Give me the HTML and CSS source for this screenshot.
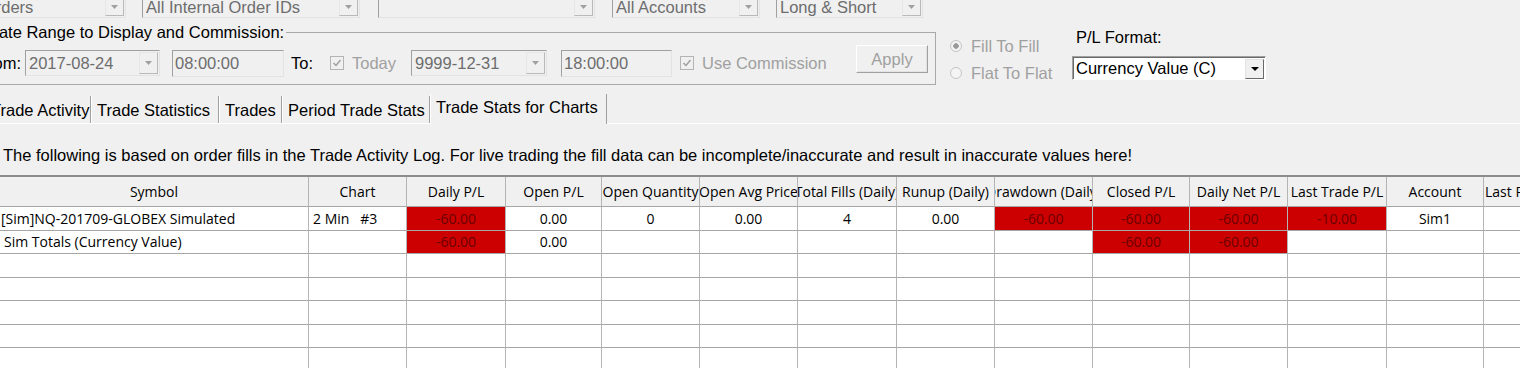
FILE: index.html
```html
<!DOCTYPE html>
<html lang="en">
<head>
    <meta charset="UTF-8">
    <title>Trade Activity and Statistics</title>
    <link rel="stylesheet" href="styles.css">
</head>
<body>
<div class="filters">
    <div class="combo combo-orders"><span class="combo-text">All Orders</span><span class="drop"><svg width="7" height="4" viewBox="0 0 7 4"><path d="M0 0h7L3.5 4z" fill="#a0a0a0"/></svg></span></div>
    <div class="combo combo-ids"><span class="combo-text">All Internal Order IDs</span><span class="drop"><svg width="7" height="4" viewBox="0 0 7 4"><path d="M0 0h7L3.5 4z" fill="#a0a0a0"/></svg></span></div>
    <div class="combo combo-blank"><span class="combo-text"></span><span class="drop"><svg width="7" height="4" viewBox="0 0 7 4"><path d="M0 0h7L3.5 4z" fill="#a0a0a0"/></svg></span></div>
    <div class="combo combo-accounts"><span class="combo-text">All Accounts</span><span class="drop"><svg width="7" height="4" viewBox="0 0 7 4"><path d="M0 0h7L3.5 4z" fill="#a0a0a0"/></svg></span></div>
    <div class="combo combo-side"><span class="combo-text">Long &amp; Short</span><span class="drop"><svg width="7" height="4" viewBox="0 0 7 4"><path d="M0 0h7L3.5 4z" fill="#a0a0a0"/></svg></span></div>
</div>

<div class="options">
    <fieldset class="range">
        <legend>Date Range to Display and Commission:</legend>
        <div class="range-row">
            <span class="lbl lbl-from">From:</span>
            <div class="combo date-from"><span class="combo-text">2017-08-24</span><span class="drop"><svg width="7" height="4" viewBox="0 0 7 4"><path d="M0 0h7L3.5 4z" fill="#a0a0a0"/></svg></span></div>
            <div class="field time-from">08:00:00</div>
            <span class="lbl lbl-to">To:</span>
            <span class="check"><svg width="12" height="12" viewBox="0 0 12 12"><path d="M2.5 6l2.5 2.5L9.5 3" stroke="#a0a0a0" stroke-width="1.5" fill="none"/></svg></span>
            <span class="lbl dim lbl-today">Today</span>
            <div class="combo date-to"><span class="combo-text">9999-12-31</span><span class="drop"><svg width="7" height="4" viewBox="0 0 7 4"><path d="M0 0h7L3.5 4z" fill="#a0a0a0"/></svg></span></div>
            <div class="field time-to">18:00:00</div>
            <span class="check check-comm"><svg width="12" height="12" viewBox="0 0 12 12"><path d="M2.5 6l2.5 2.5L9.5 3" stroke="#a0a0a0" stroke-width="1.5" fill="none"/></svg></span>
            <span class="lbl dim lbl-comm">Use Commission</span>
            <button class="apply" disabled>Apply</button>
        </div>
    </fieldset>

    <div class="radios">
        <div class="radio-row"><span class="radio on"></span>Fill To Fill</div>
        <div class="radio-row second"><span class="radio"></span>Flat To Flat</div>
    </div>

    <div class="plformat">
        <div class="pl-label">P/L Format:</div>
        <div class="select"><span class="select-text">Currency Value (C)</span><span class="select-btn"><svg width="8" height="4" viewBox="0 0 8 4"><path d="M0 0h8L4 4z" fill="#000"/></svg></span></div>
    </div>
</div>

<div class="tabs">
    <div class="tab tab-activity">Trade Activity</div>
    <div class="tab tab-stats">Trade Statistics</div>
    <div class="tab tab-trades">Trades</div>
    <div class="tab tab-period">Period Trade Stats</div>
    <div class="tab tab-charts active">Trade Stats for Charts</div>
</div>

<p class="notice">The following is based on order fills in the Trade Activity Log. For live trading the fill data can be incomplete/inaccurate and result in inaccurate values here!</p>

<div class="grid">
    <div class="h"><span>Symbol</span></div><div class="h"><span>Chart</span></div><div class="h"><span>Daily P/L</span></div><div class="h"><span>Open P/L</span></div><div class="h"><span>Open Quantity</span></div><div class="h"><span>Open Avg Price</span></div><div class="h"><span>Total Fills (Daily)</span></div><div class="h"><span>Runup (Daily)</span></div><div class="h"><span>Drawdown (Daily)</span></div><div class="h"><span>Closed P/L</span></div><div class="h"><span>Daily Net P/L</span></div><div class="h"><span>Last Trade P/L</span></div><div class="h"><span>Account</span></div><div class="h h-last"><span>Last Position P/L</span></div>

    <div class="c sym">[Sim]NQ-201709-GLOBEX Simulated</div><div class="c chart">2 Min   #3</div><div class="c neg">-60.00</div><div class="c">0.00</div><div class="c">0</div><div class="c">0.00</div><div class="c">4</div><div class="c">0.00</div><div class="c neg">-60.00</div><div class="c neg">-60.00</div><div class="c neg">-60.00</div><div class="c neg">-10.00</div><div class="c">Sim1</div><div class="c"></div>

    <div class="c sym total">Sim Totals (Currency Value)</div><div class="c"></div><div class="c neg">-60.00</div><div class="c">0.00</div><div class="c"></div><div class="c"></div><div class="c"></div><div class="c"></div><div class="c"></div><div class="c neg">-60.00</div><div class="c neg">-60.00</div><div class="c"></div><div class="c"></div><div class="c"></div>

    <div class="c"></div><div class="c"></div><div class="c"></div><div class="c"></div><div class="c"></div><div class="c"></div><div class="c"></div><div class="c"></div><div class="c"></div><div class="c"></div><div class="c"></div><div class="c"></div><div class="c"></div><div class="c"></div>
    <div class="c"></div><div class="c"></div><div class="c"></div><div class="c"></div><div class="c"></div><div class="c"></div><div class="c"></div><div class="c"></div><div class="c"></div><div class="c"></div><div class="c"></div><div class="c"></div><div class="c"></div><div class="c"></div>
    <div class="c"></div><div class="c"></div><div class="c"></div><div class="c"></div><div class="c"></div><div class="c"></div><div class="c"></div><div class="c"></div><div class="c"></div><div class="c"></div><div class="c"></div><div class="c"></div><div class="c"></div><div class="c"></div>
    <div class="c"></div><div class="c"></div><div class="c"></div><div class="c"></div><div class="c"></div><div class="c"></div><div class="c"></div><div class="c"></div><div class="c"></div><div class="c"></div><div class="c"></div><div class="c"></div><div class="c"></div><div class="c"></div>
    <div class="c"></div><div class="c"></div><div class="c"></div><div class="c"></div><div class="c"></div><div class="c"></div><div class="c"></div><div class="c"></div><div class="c"></div><div class="c"></div><div class="c"></div><div class="c"></div><div class="c"></div><div class="c"></div>
</div>
</body>
</html>
```

FILE: styles.css
```css
body {
    margin: 0;
    width: 1520px;
    height: 368px;
    overflow: hidden;
    background-color: #f0f0f0;
    font-family: "Liberation Sans", Arial, sans-serif;
    font-size: 16.5px;
    color: #000;
}

/* top filter combos, cut off by the window top */
.filters {
    display: flex;
    height: 18px;
}

.combo {
    display: flex;
    align-items: center;
    box-sizing: border-box;
    height: 24px;
    border: 1px solid #e3e3e3;
    border-top-color: #a0a0a0;
    border-left-color: #a0a0a0;
    background-color: #f0f0f0;
    color: #6d6d6d;
}

.filters .combo {
    height: 23px;
    margin-top: -5px;
}

.combo-text {
    flex: 1;
    padding-left: 3px;
    line-height: 18px;
    white-space: nowrap;
    overflow: hidden;
}

.drop {
    display: flex;
    align-items: center;
    justify-content: center;
    box-sizing: border-box;
    width: 19px;
    height: calc(100% - 2px);
    margin-right: 1px;
    border: 1px solid #b9b9b9;
    border-top-color: #e6e6e6;
    border-left-color: #e6e6e6;
}

.combo-orders { margin-left: -44px; width: 170px; }
.combo-ids { margin-left: 16px; width: 218px; }
.combo-blank { margin-left: 18px; width: 217px; }
.combo-accounts { margin-left: 17px; width: 148px; }
.combo-side { margin-left: 16px; width: 147px; }

/* date range group */
.options {
    display: flex;
    margin-top: 5px;
}

.range {
    box-sizing: border-box;
    width: 966px;
    min-inline-size: 0;
    margin: 0 0 0 -30px;
    padding: 0;
    border: 1px solid #a9a9a9;
}

.range legend {
    margin-left: 16px;
    padding: 0 2px 0 0;
    line-height: 18px;
}

.range-row {
    display: flex;
    align-items: flex-start;
    height: 32px;
    padding: 4px 7px 7px 0;
}

.lbl {
    margin-top: 9px;
    line-height: 18px;
    white-space: nowrap;
}

.dim {
    color: #a0a0a0;
}

.lbl-from { margin-left: 7px; width: 47px; }
.lbl-to { margin-left: 7px; width: 39px; }
.lbl-today { margin-left: 8px; width: 59px; }
.lbl-comm { margin-left: 8px; }

.date-from, .date-to {
    height: 26px;
    margin-top: 5px;
}
.date-from { width: 135px; }
.date-to { width: 136px; }

.field {
    box-sizing: border-box;
    height: 27px;
    margin-top: 5px;
    padding-left: 2px;
    line-height: 24px;
    border: 1px solid #e3e3e3;
    border-top-color: #a0a0a0;
    border-left-color: #a0a0a0;
    color: #6d6d6d;
}
.time-from { margin-left: 12px; width: 112px; }
.time-to { margin-left: 14px; width: 111px; }

.check {
    display: flex;
    align-items: center;
    justify-content: center;
    box-sizing: border-box;
    width: 14px;
    height: 14px;
    margin-top: 11px;
    border: 1px solid #b4b4b4;
}
.check-comm { margin-left: 8px; }

.apply {
    width: 72px;
    height: 28px;
    margin-left: auto;
    padding: 0;
    font-family: inherit;
    font-size: 16.5px;
    color: #a0a0a0;
    background-color: #f0f0f0;
    border: 1px solid #a0a0a0;
    border-top-color: #fff;
    border-left-color: #fff;
    box-shadow: inset -1px -1px 0 #e3e3e3;
}

/* fill mode radios */
.radios {
    width: 122px;
    margin-left: 14px;
    padding-top: 14px;
    color: #a0a0a0;
}

.radio-row {
    display: flex;
    align-items: center;
    line-height: 18px;
    white-space: nowrap;
}
.radio-row.second {
    margin-top: 9px;
}

.radio {
    box-sizing: border-box;
    width: 12px;
    height: 12px;
    margin-right: 9px;
    border: 1px solid #c4c4c4;
    border-radius: 50%;
    background-color: #f4f4f4;
}
.radio.on {
    background: radial-gradient(circle, #9a9a9a 0 2.5px, #f4f4f4 3px);
}

/* P/L format select */
.plformat {
    margin-top: 5px;
}

.pl-label {
    padding-left: 4px;
    line-height: 18px;
}

.select {
    display: flex;
    align-items: center;
    box-sizing: border-box;
    width: 194px;
    height: 24px;
    margin-top: 10px;
    background-color: #fff;
    border: 1px solid #fff;
    border-top-color: #a0a0a0;
    border-left-color: #a0a0a0;
    box-shadow: inset 1px 1px 0 #696969;
}

.select-text {
    flex: 1;
    padding-left: 3px;
    line-height: 18px;
    white-space: nowrap;
}

.select-btn {
    display: flex;
    align-items: center;
    justify-content: center;
    box-sizing: border-box;
    width: 19px;
    height: 20px;
    margin-right: 1px;
    margin-top: 1px;
    background-color: #f0f0f0;
    border: 1px solid #696969;
    border-top-color: #e3e3e3;
    border-left-color: #e3e3e3;
}

/* tab strip */
.tabs {
    display: flex;
    height: 27px;
    margin-top: 11px;
    border-bottom: 1px solid #fff;
}

.tab {
    box-sizing: border-box;
    height: 27px;
    padding: 5px 0 0 6px;
    line-height: 18px;
    white-space: nowrap;
    overflow: hidden;
    border-right: 1px solid #a0a0a0;
    box-shadow: inset 1px 0 0 #fff;
}

.tab-activity { margin-left: -15px; width: 106px; }
.tab-stats { width: 128px; }
.tab-trades { width: 63px; }
.tab-period { width: 148px; }
.tab-charts { width: 177px; }

.tab.active {
    height: 30px;
    margin-top: -2px;
    padding-top: 4px;
    background-color: #f0f0f0;
}

.notice {
    margin: 22px 0 0 3px;
    line-height: 18px;
    white-space: nowrap;
}

/* data grid */
.grid {
    display: grid;
    grid-template-columns: 309px 98px 99px 96px 98px 98px 99px 98px 98px 97px 98px 99px 97px 120px;
    grid-template-rows: 30px;
    grid-auto-rows: 23.5px;
    margin-top: 11px;
    border-top: 2px solid #8c8c8c;
    font-family: "Open Sans", "Noto Sans", sans-serif;
    font-size: 14px;
}

.h, .c {
    display: flex;
    align-items: center;
    justify-content: center;
    box-sizing: border-box;
    overflow: hidden;
    white-space: nowrap;
    border-right: 1px solid #b4b4b4;
    border-bottom: 1px solid #a6a6a6;
}

.h {
    background-color: #f0f0f0;
}

.h span {
    flex-shrink: 0;
}

.h-last {
    justify-content: flex-start;
    padding-left: 1px;
}

.c {
    background-color: #fff;
}

.c.sym {
    justify-content: flex-start;
    padding-left: 1px;
}

.c.sym.total {
    padding-left: 4px;
}

.c.chart {
    justify-content: flex-start;
    padding-left: 4px;
    white-space: pre;
}

.c.neg {
    background-color: #cc0000;
    color: #6b0000;
}
```
